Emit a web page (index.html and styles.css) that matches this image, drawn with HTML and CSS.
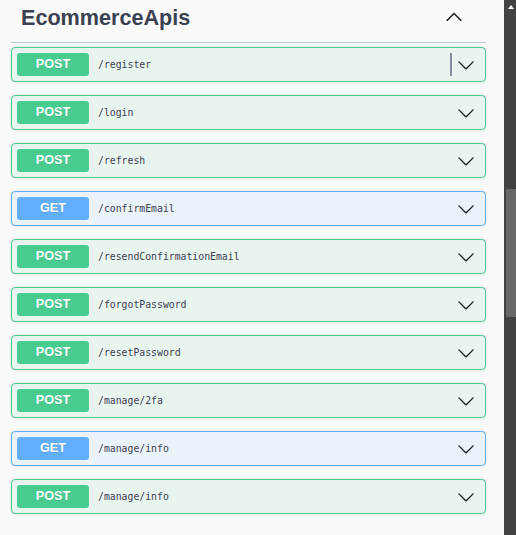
FILE: index.html
```html
<!DOCTYPE html>
<html lang="en">
<head>
<meta charset="utf-8">
<title>EcommerceApis</title>
<link rel="stylesheet" href="styles.css">
</head>
<body>
<div class="page">
  <main class="content">
    <div class="tag-header">
      <h3 class="tag-title">EcommerceApis</h3>
      <svg class="tag-arrow" width="20" height="20" viewBox="0 0 20 20"><path d="M17.418 14.908c-.272.278-.778.284-1.064 0L10 8.597l-6.355 6.311c-.284.284-.779.278-1.063 0a.745.745 0 0 1 0-1.054l6.879-6.88a.74.74 0 0 1 1.064 0l6.879 6.88a.763.763 0 0 1 0 1.054z"/></svg>
    </div>
    <div class="ops">
      <div class="op op-post">
        <span class="method">POST</span><span class="path">/register</span><span class="spacer"></span><span class="focus-bar"></span>
        <svg class="op-arrow" width="18" height="18" viewBox="0 0 20 20"><path d="M17.418 6.109c.272-.268.709-.268.979 0s.271.701 0 .969l-7.908 7.83c-.27.268-.707.268-.979 0l-7.908-7.83c-.27-.268-.27-.701 0-.969.271-.268.709-.268.979 0L10 13.25l7.418-7.141z"/></svg>
      </div>
      <div class="op op-post">
        <span class="method">POST</span><span class="path">/login</span><span class="spacer"></span>
        <svg class="op-arrow" width="18" height="18" viewBox="0 0 20 20"><path d="M17.418 6.109c.272-.268.709-.268.979 0s.271.701 0 .969l-7.908 7.83c-.27.268-.707.268-.979 0l-7.908-7.83c-.27-.268-.27-.701 0-.969.271-.268.709-.268.979 0L10 13.25l7.418-7.141z"/></svg>
      </div>
      <div class="op op-post">
        <span class="method">POST</span><span class="path">/refresh</span><span class="spacer"></span>
        <svg class="op-arrow" width="18" height="18" viewBox="0 0 20 20"><path d="M17.418 6.109c.272-.268.709-.268.979 0s.271.701 0 .969l-7.908 7.83c-.27.268-.707.268-.979 0l-7.908-7.830c-.27-.268-.27-.701 0-.969.271-.268.709-.268.979 0L10 13.25l7.418-7.141z"/></svg>
      </div>
      <div class="op op-get">
        <span class="method">GET</span><span class="path">/confirmEmail</span><span class="spacer"></span>
        <svg class="op-arrow" width="18" height="18" viewBox="0 0 20 20"><path d="M17.418 6.109c.272-.268.709-.268.979 0s.271.701 0 .969l-7.908 7.83c-.27.268-.707.268-.979 0l-7.908-7.83c-.27-.268-.27-.701 0-.969.271-.268.709-.268.979 0L10 13.25l7.418-7.141z"/></svg>
      </div>
      <div class="op op-post">
        <span class="method">POST</span><span class="path">/resendConfirmationEmail</span><span class="spacer"></span>
        <svg class="op-arrow" width="18" height="18" viewBox="0 0 20 20"><path d="M17.418 6.109c.272-.268.709-.268.979 0s.271.701 0 .969l-7.908 7.83c-.27.268-.707.268-.979 0l-7.908-7.83c-.27-.268-.27-.701 0-.969.271-.268.709-.268.979 0L10 13.25l7.418-7.141z"/></svg>
      </div>
      <div class="op op-post">
        <span class="method">POST</span><span class="path">/forgotPassword</span><span class="spacer"></span>
        <svg class="op-arrow" width="18" height="18" viewBox="0 0 20 20"><path d="M17.418 6.109c.272-.268.709-.268.979 0s.271.701 0 .969l-7.908 7.83c-.27.268-.707.268-.979 0l-7.908-7.83c-.27-.268-.27-.701 0-.969.271-.268.709-.268.979 0L10 13.25l7.418-7.141z"/></svg>
      </div>
      <div class="op op-post">
        <span class="method">POST</span><span class="path">/resetPassword</span><span class="spacer"></span>
        <svg class="op-arrow" width="18" height="18" viewBox="0 0 20 20"><path d="M17.418 6.109c.272-.268.709-.268.979 0s.271.701 0 .969l-7.908 7.83c-.27.268-.707.268-.979 0l-7.908-7.83c-.27-.268-.27-.701 0-.969.271-.268.709-.268.979 0L10 13.25l7.418-7.141z"/></svg>
      </div>
      <div class="op op-post">
        <span class="method">POST</span><span class="path">/manage/2fa</span><span class="spacer"></span>
        <svg class="op-arrow" width="18" height="18" viewBox="0 0 20 20"><path d="M17.418 6.109c.272-.268.709-.268.979 0s.271.701 0 .969l-7.908 7.83c-.27.268-.707.268-.979 0l-7.908-7.83c-.27-.268-.27-.701 0-.969.271-.268.709-.268.979 0L10 13.25l7.418-7.141z"/></svg>
      </div>
      <div class="op op-get">
        <span class="method">GET</span><span class="path">/manage/info</span><span class="spacer"></span>
        <svg class="op-arrow" width="18" height="18" viewBox="0 0 20 20"><path d="M17.418 6.109c.272-.268.709-.268.979 0s.271.701 0 .969l-7.908 7.83c-.27.268-.707.268-.979 0l-7.908-7.83c-.27-.268-.27-.701 0-.969.271-.268.709-.268.979 0L10 13.25l7.418-7.141z"/></svg>
      </div>
      <div class="op op-post">
        <span class="method">POST</span><span class="path">/manage/info</span><span class="spacer"></span>
        <svg class="op-arrow" width="18" height="18" viewBox="0 0 20 20"><path d="M17.418 6.109c.272-.268.709-.268.979 0s.271.701 0 .969l-7.908 7.83c-.27.268-.707.268-.979 0l-7.908-7.83c-.27-.268-.27-.701 0-.969.271-.268.709-.268.979 0L10 13.25l7.418-7.141z"/></svg>
      </div>
    </div>
  </main>
  <div class="scrollbar">
    <div class="scroll-up"><span class="scroll-tri"></span></div>
    <div class="scroll-thumb"></div>
  </div>
</div>
</body>
</html>
```

FILE: styles.css
```css
html, body {
  margin: 0;
  padding: 0;
  height: 100%;
  overflow: hidden;
  background: #fafafa;
}

.page {
  display: flex;
  height: 100%;
}

.content {
  flex: 1;
  padding: 0 18px 0 11px;
  font-family: "Liberation Sans", Arial, sans-serif;
  color: #3b4151;
}

.tag-header {
  display: flex;
  justify-content: space-between;
  align-items: flex-start;
  height: 42px;
  border-bottom: 1px solid #c4c6cb;
}

.tag-title {
  margin: 6px 0 0 10px;
  font-size: 21.6px;
  line-height: 24px;
  font-weight: bold;
  color: #3b4151;
}

.tag-arrow {
  margin: 6px 22px 0 0;
  fill: #222;
}

.ops {
  display: flex;
  flex-direction: column;
  gap: 13px;
  margin-top: 4px;
}

.op {
  display: flex;
  align-items: center;
  height: 23px;
  padding: 5px 10px 5px 5px;
  border: 1px solid;
  border-radius: 4px;
  box-shadow: 0 0 3px rgba(0, 0, 0, 0.12);
}

.op-post {
  background: #e8f5ef;
  border-color: #49cc90;
}

.op-get {
  background: #ebf3fa;
  border-color: #61affe;
}

.method {
  width: 72px;
  height: 23px;
  line-height: 23px;
  text-align: center;
  border-radius: 3px;
  color: #fff;
  font-family: "Liberation Sans Narrow", "Liberation Sans", Arial, sans-serif;
  font-weight: bold;
  font-size: 12.6px;
  text-shadow: 0 1px 0 rgba(0, 0, 0, 0.1);
}

.op-post .method { background: #49cc90; }
.op-get .method { background: #61affe; }

.path {
  margin-left: 9px;
  font-family: "DejaVu Sans Mono", "Liberation Mono", monospace;
  font-size: 9.8px;
  color: #3b4151;
}

.spacer { flex: 1; }

.focus-bar {
  width: 2px;
  height: 23px;
  margin-right: 5px;
  background: #878c9a;
}

.op-arrow {
  fill: #1b1b1b;
}

.scrollbar {
  width: 12px;
  background: #424242;
  display: flex;
  flex-direction: column;
}

.scroll-up {
  height: 17px;
  display: flex;
  justify-content: center;
  padding-top: 5px;
  box-sizing: border-box;
  padding-left: 2px;
}

.scroll-tri {
  width: 0;
  height: 0;
  border-left: 3.5px solid transparent;
  border-right: 3.5px solid transparent;
  border-bottom: 4px solid #fff;
}

.scroll-thumb {
  margin: 172px 0 0 2px;
  width: 10px;
  height: 128px;
  background: #686868;
}
```
